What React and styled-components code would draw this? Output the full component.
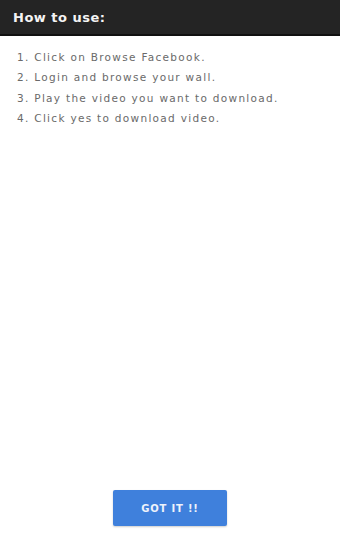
import React from 'react'
import styled, { createGlobalStyle } from 'styled-components';

const GlobalStyle = createGlobalStyle`
	html, body {
		margin: 0;
		padding: 0;
		background: #ffffff;
	}
	#root {
		height: 100vh;
	}
`;

const steps = [
	'1. Click on Browse Facebook.',
	'2. Login and browse your wall.',
	'3. Play the video you want to download.',
	'4. Click yes to download video.'
];

const App = () => {
	return (
		<Screen>
			<GlobalStyle />
			<Header>
				<Title>How to use:</Title>
			</Header>
			<StepList>
				{
					steps.map(step => <Step key={step}>{step}</Step>)
				}
			</StepList>
			<Footer>
				<GotItButton>GOT IT !!</GotItButton>
			</Footer>
		</Screen>
	)
}

export default App;


const Screen = styled.div`
	height: 100%;
	display: flex;
	flex-direction: column;
	font-family: "DejaVu Sans", "Liberation Sans", sans-serif;
`;

const Header = styled.header`
	height: 34px;
	background-color: #242424;
	border-bottom: 2px solid #111;
	display: flex;
	align-items: center;
	padding: 0 13px;
`;

const Title = styled.h1`
	margin: 0;
	color: #f4f4f4;
	font-size: 13px;
	font-weight: bold;
	letter-spacing: 0.5px;
`;

const StepList = styled.div`
	flex: 1;
	padding: 11px 17px 0;
	display: flex;
	flex-direction: column;
`;

const Step = styled.p`
	margin: 0;
	height: 20.3px;
	line-height: 20.3px;
	color: #6a6a6a;
	font-size: 10.5px;
	letter-spacing: 1.3px;
	white-space: nowrap;
`;

const Footer = styled.div`
	display: flex;
	justify-content: center;
	padding-bottom: 17px;
`;

const GotItButton = styled.button`
	width: 114px;
	height: 36px;
	border: none;
	border-radius: 2px;
	background-color: #3f80dc;
	color: #eef3fb;
	font-family: "DejaVu Sans", sans-serif;
	font-size: 10px;
	font-weight: 600;
	letter-spacing: 0.8px;
	box-shadow: 0 1px 2px rgba(0, 0, 0, 0.2);
`;
